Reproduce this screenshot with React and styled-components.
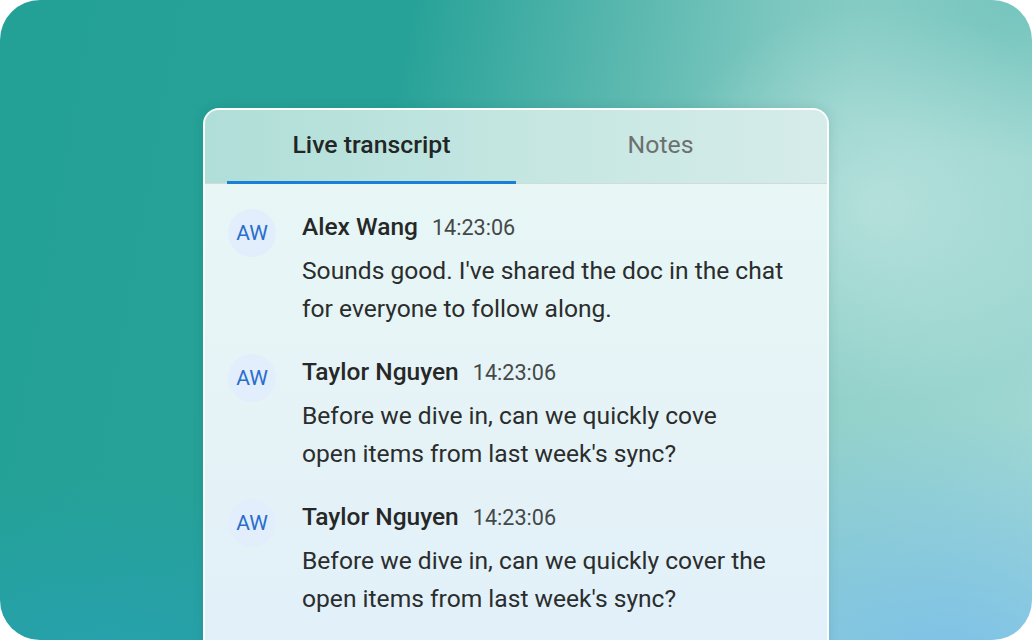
import React from "react";
import styled, { createGlobalStyle } from "styled-components";

const Global = createGlobalStyle`
  html, body { margin: 0; padding: 0; background: #ffffff; }
  body { font-family: Roboto, "Noto Sans", "Liberation Sans", sans-serif; }
  * { box-sizing: border-box; }
`;

const Stage = styled.div`
  width: 1032px;
  height: 640px;
  border-radius: 40px;
  overflow: hidden;
  display: flex;
  justify-content: center;
  padding-top: 108px;
  background:
    radial-gradient(ellipse 220px 200px at 85% 32%, rgba(230, 246, 244, 0.4), rgba(230, 246, 244, 0) 100%),
    radial-gradient(ellipse 260px 160px at 100% 0%, rgba(100, 190, 182, 0.7), rgba(100, 190, 182, 0) 100%),
    radial-gradient(ellipse 380px 260px at 92% 105%, rgba(120, 190, 235, 0.9), rgba(120, 190, 235, 0) 100%),
    radial-gradient(ellipse 360px 200px at 10% 105%, rgba(40, 160, 190, 0.6), rgba(40, 160, 190, 0) 100%),
    linear-gradient(100deg, #24a196 0%, #27a298 36%, #5cb9b0 56%, #90d0c9 76%, #a1d8d3 100%);
`;

const Card = styled.div`
  width: 626px;
  height: 560px;
  flex-shrink: 0;
  border-radius: 16px 16px 0 0;
  border: 2px solid rgba(255, 255, 255, 0.85);
  border-bottom: none;
  overflow: hidden;
  display: flex;
  flex-direction: column;
  background: linear-gradient(180deg, #e8f7f5 0%, #e5f3f7 60%, #e1effa 100%);
  box-shadow: 0 0 12px rgba(0, 60, 70, 0.12);
`;

const TabBar = styled.div`
  display: flex;
  padding: 0 22px;
  height: 74px;
  border-bottom: 1px solid #cfdcdb;
  background: linear-gradient(90deg, #b0ded8 0%, #c4e6e1 50%, #d6ecea 100%);
`;

const Tab = styled.div`
  flex: 1;
  display: flex;
  align-items: center;
  justify-content: center;
  padding-bottom: 4px;
  font-size: 24.8px;
  font-weight: ${(p) => (p.$active ? 500 : 400)};
  color: ${(p) => (p.$active ? "#222626" : "#6d7070")};
  position: relative;
  &::after {
    content: "";
    position: absolute;
    left: 0;
    right: 0;
    bottom: -1px;
    height: 3px;
    background: ${(p) => (p.$active ? "#1a80d6" : "transparent")};
  }
`;

const List = styled.div`
  display: flex;
  flex-direction: column;
  gap: 26px;
  padding: 25px 22px 0 23px;
`;

const Message = styled.div`
  display: flex;
  align-items: flex-start;
  gap: 26px;
`;

const Avatar = styled.div`
  width: 48px;
  height: 48px;
  border-radius: 50%;
  flex-shrink: 0;
  background: #e2eefc;
  color: #2a6dcc;
  font-size: 21px;
  display: flex;
  align-items: center;
  justify-content: center;
`;

const Content = styled.div`
  display: flex;
  flex-direction: column;
  gap: 7px;
`;

const Header = styled.div`
  display: flex;
  align-items: baseline;
  gap: 14px;
  height: 36px;
  line-height: 36px;
`;

const Name = styled.span`
  font-size: 24.5px;
  font-weight: 500;
  color: #262828;
`;

const Time = styled.span`
  font-size: 21.6px;
  color: #454848;
`;

const Text = styled.div`
  font-size: 24.6px;
  line-height: 38px;
  color: #2b2d2d;
`;

const Line = styled.span`
  display: block;
  white-space: nowrap;
`;

const messages = [
  {
    name: "Alex Wang",
    time: "14:23:06",
    lines: ["Sounds good. I've shared the doc in the chat", "for everyone to follow along."],
  },
  {
    name: "Taylor Nguyen",
    time: "14:23:06",
    lines: ["Before we dive in, can we quickly cove", "open items from last week's sync?"],
  },
  {
    name: "Taylor Nguyen",
    time: "14:23:06",
    lines: ["Before we dive in, can we quickly cover the", "open items from last week's sync?"],
  },
];

export default function App() {
  return (
    <>
      <Global />
      <Stage>
        <Card>
          <TabBar>
            <Tab $active>Live transcript</Tab>
            <Tab>Notes</Tab>
          </TabBar>
          <List>
            {messages.map((m, i) => (
              <Message key={i}>
                <Avatar>AW</Avatar>
                <Content>
                  <Header>
                    <Name>{m.name}</Name>
                    <Time>{m.time}</Time>
                  </Header>
                  <Text>
                    {m.lines.map((l, j) => (
                      <Line key={j}>{l}</Line>
                    ))}
                  </Text>
                </Content>
              </Message>
            ))}
          </List>
        </Card>
      </Stage>
    </>
  );
}
